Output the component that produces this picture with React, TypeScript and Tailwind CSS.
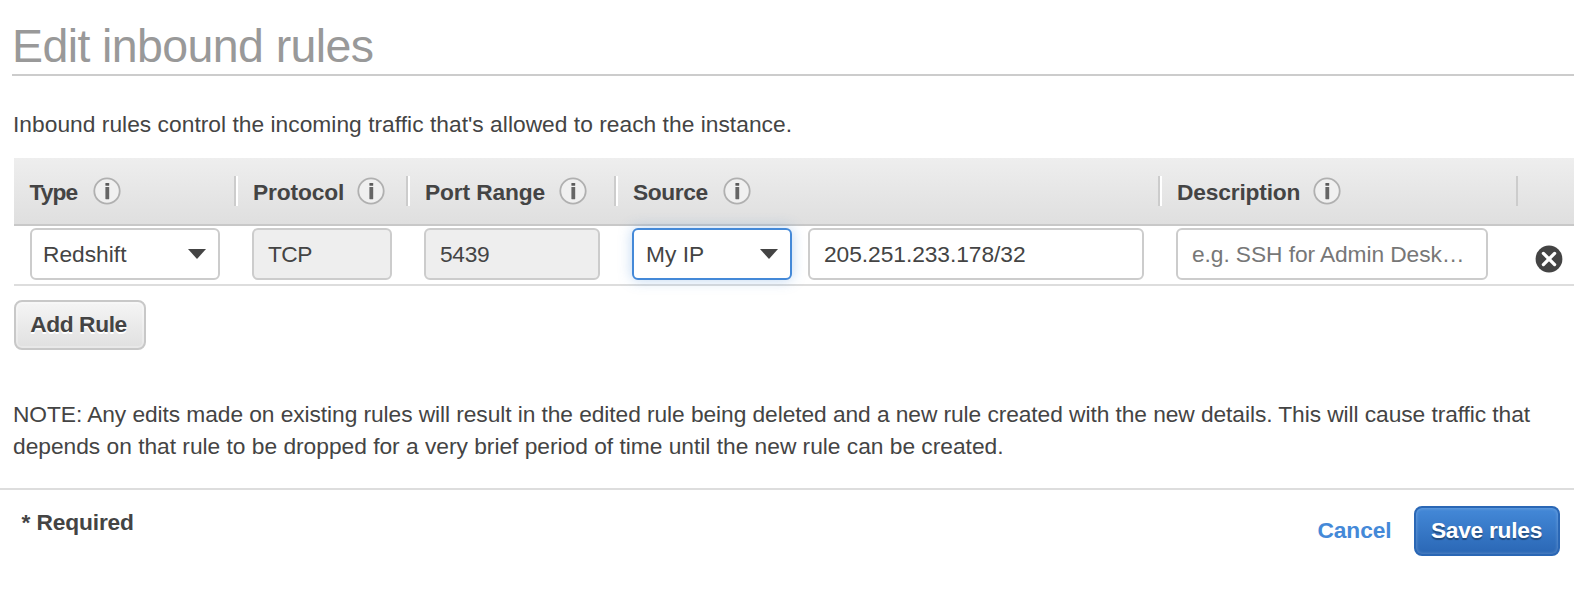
import type { ReactNode } from "react";

function InfoIcon({ className }: { className: string }) {
  return (
    <svg viewBox="0 0 28 28" className={`size-7 shrink-0 ${className}`} aria-hidden="true">
      <circle cx="14" cy="14" r="12.7" fill="#f0f0f0" stroke="#b0b0b0" strokeWidth="1.8" />
      <rect x="12.4" y="6" width="3.8" height="2.8" rx="0.6" fill="#5c5c5c" />
      <rect x="12.4" y="10" width="3.8" height="12.2" rx="0.4" fill="#666" />
    </svg>
  );
}

function Caret() {
  return (
    <svg viewBox="0 0 18 10" className="h-2.5 w-[18px] shrink-0" aria-hidden="true">
      <path d="M0 0H18L9 10Z" fill="#444" />
    </svg>
  );
}

function HeaderCell({ label, first, tracking, gap }: { label: string; first?: boolean; tracking: string; gap: string }) {
  return (
    <div
      className={
        first
          ? "flex h-[30px] items-center pl-[15.5px]"
          : "flex h-[30px] items-center border-l-2 border-[#ccc] pl-[17px] shadow-[inset_2px_0_0_#fff]"
      }
    >
      <span className={`pt-px font-bold whitespace-nowrap ${tracking}`}>{label}</span>
      <InfoIcon className={gap} />
    </div>
  );
}

function Select({ children, className }: { children: ReactNode; className: string }) {
  return (
    <div className={`flex h-[52px] items-center justify-between rounded-md border-2 bg-white pr-3 ${className}`}>
      <span className="-mt-px whitespace-nowrap">{children}</span>
      <Caret />
    </div>
  );
}

function Field({ children, className }: { children: ReactNode; className: string }) {
  return (
    <div className={`flex h-[52px] items-center rounded-md border-2 border-[#ccc] pb-px pl-[14px] whitespace-nowrap ${className}`}>
      {children}
    </div>
  );
}

const columns = "grid grid-cols-[220px_172px_208px_544px_358px_58px]";

export default function App() {
  return (
    <div className="h-[598px] w-[1594px] overflow-hidden bg-white font-['Liberation_Sans',Arial,sans-serif] text-[22.75px] leading-8 text-[#444]">
      <div className="w-[1574px] pl-3">
        <h1 className="border-b-2 border-[#ccc] pt-[18px] text-[46.5px] leading-[56px] tracking-[-0.6px] text-[#999]">
          Edit inbound rules
        </h1>
      </div>

      <main className="w-[1574px] pt-8 pl-[13px]">
        <p className="tracking-[0.03px] whitespace-nowrap">
          Inbound rules control the incoming traffic that's allowed to reach the instance.
        </p>

        <section className="mt-[18px] ml-px">
          <div className={`${columns} h-[68px] items-center border-b-2 border-[#c8c8c8] bg-linear-to-b from-[#eee] to-[#dfdfdf]`}>
            <HeaderCell label="Type" first tracking="tracking-[-0.9px]" gap="ml-[15.5px]" />
            <HeaderCell label="Protocol" tracking="tracking-[-0.15px]" gap="ml-[12.5px]" />
            <HeaderCell label="Port Range" tracking="tracking-[-0.12px]" gap="ml-[13.5px]" />
            <HeaderCell label="Source" tracking="tracking-[-0.37px]" gap="ml-[15.5px]" />
            <HeaderCell label="Description" tracking="tracking-[-0.17px]" gap="ml-[13px]" />
            <div className="h-[30px] border-l-2 border-[#ccc]" />
          </div>

          <div className={`${columns} h-[60px] border-b-2 border-[#ddd] pt-0.5`}>
            <div className="pl-4">
              <Select className="w-[190px] border-[#ccc] pl-[11px]">Redshift</Select>
            </div>
            <div className="pl-[18px]">
              <Field className="w-[140px] bg-[#eee] tracking-[-0.6px]">TCP</Field>
            </div>
            <div className="pl-[18px]">
              <Field className="w-44 bg-[#eee] tracking-[-0.3px]">5439</Field>
            </div>
            <div className="flex gap-4 pl-[18px]">
              <Select className="w-40 border-[#4489d8] pl-3 shadow-[0_0_14px_rgba(68,137,216,0.35)]">My IP</Select>
              <Field className="w-[336px] bg-white tracking-[-0.05px]">205.251.233.178/32</Field>
            </div>
            <div className="pl-[18px]">
              <Field className="w-[312px] bg-white tracking-[-0.08px] text-[#777]">e.g. SSH for Admin Desk…</Field>
            </div>
            <div className="pt-[17px] pl-[19px]">
              <svg viewBox="0 0 28 28" className="size-7" aria-hidden="true">
                <circle cx="14" cy="14" r="13.4" fill="#444" />
                <path d="M8.4 8.4L19.6 19.6M19.6 8.4L8.4 19.6" stroke="#fff" strokeWidth="3.3" strokeLinecap="round" />
              </svg>
            </div>
          </div>

          <button className="mt-[14px] flex h-[50px] w-[132px] items-center justify-center rounded-lg border-2 border-[#c8c8c8] bg-linear-to-b from-[#f5f5f5] to-[#e0e0e0] pr-[3px] pb-[3px] font-bold tracking-[-0.4px] whitespace-nowrap shadow-[inset_0_0_0_2px_rgba(255,255,255,0.25)] text-shadow-[0_2px_0_#fff]">
            Add Rule
          </button>
        </section>

        <p className="mt-12 whitespace-nowrap">
          <span className="tracking-[-0.07px]">
            NOTE: Any edits made on existing rules will result in the edited rule being deleted and a new rule created with the new details. This will cause traffic that
          </span>
          <br />
          <span className="tracking-[-0.01px]">
            depends on that rule to be dropped for a very brief period of time until the new rule can be created.
          </span>
        </p>
      </main>

      <footer className="mt-[26px] flex w-[1574px] items-start justify-between border-t-2 border-[#ddd] pt-4 pr-[14px] pl-[21.5px] font-bold">
        <span className="tracking-[-0.14px]">* Required</span>
        <div className="flex items-center">
          <a className="mr-[22.5px] pb-[3px] tracking-[-0.1px] text-[#4489d8]">Cancel</a>
          <button className="flex h-[50px] w-[146px] items-center justify-center rounded-lg border-2 border-[#2a67b5] bg-linear-to-b from-[#4489d8] to-[#2a67b5] pr-px pb-[3px] tracking-[-0.26px] whitespace-nowrap text-white shadow-[inset_0_0_3px_1px_rgba(255,255,255,0.18)] text-shadow-[0_2px_1px_rgba(0,0,0,0.35)]">
            Save rules
          </button>
        </div>
      </footer>
    </div>
  );
}
